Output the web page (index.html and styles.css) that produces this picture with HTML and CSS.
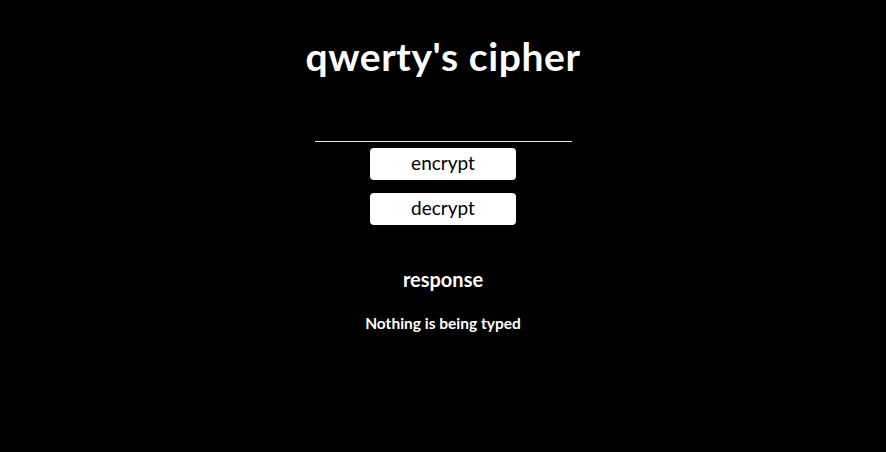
FILE: index.html
```html
<!DOCTYPE html>
<html>
<head>
<meta charset="utf-8">
<link rel="stylesheet" href="styles.css">
</head>
<body>
<main class="app">
  <h1 class="title">qwerty's cipher</h1>
  <input class="field" type="text">
  <button class="btn btn-first">encrypt</button>
  <button class="btn">decrypt</button>
  <h2 class="response">response</h2>
  <p class="message">Nothing is being typed</p>
</main>
</body>
</html>
```
FILE: styles.css
```css
html, body {
  margin: 0;
  padding: 0;
  background: #000;
  height: 100%;
}
.app {
  display: flex;
  flex-direction: column;
  align-items: center;
  font-family: "Lato", "Open Sans", sans-serif;
  color: #fff;
  padding-top: 34px;
}
.title {
  margin: 0;
  font-size: 39px;
  font-weight: 700;
  line-height: 44px;
  letter-spacing: 0.6px;
}
.field {
  margin-top: 53px;
  width: 257px;
  height: 10px;
  padding: 0;
  background: transparent;
  border: none;
  border-bottom: 1.5px solid #e8e8e8;
  outline: none;
  color: #fff;
}
.btn {
  width: 146px;
  height: 32px;
  background: #fff;
  color: #000;
  border: none;
  border-radius: 4px;
  font-family: "Lato", "Open Sans", sans-serif;
  font-size: 19px;
  line-height: 28px;
  padding: 0 0 3px;
  margin-top: 13px;
}
.btn-first {
  margin-top: 6px;
}
.response {
  margin: 43px 0 0;
  font-size: 20px;
  font-weight: 700;
  line-height: 22px;
}
.message {
  margin: 24px 0 0;
  font-size: 15.5px;
  font-weight: 700;
  line-height: 18px;
}
```
